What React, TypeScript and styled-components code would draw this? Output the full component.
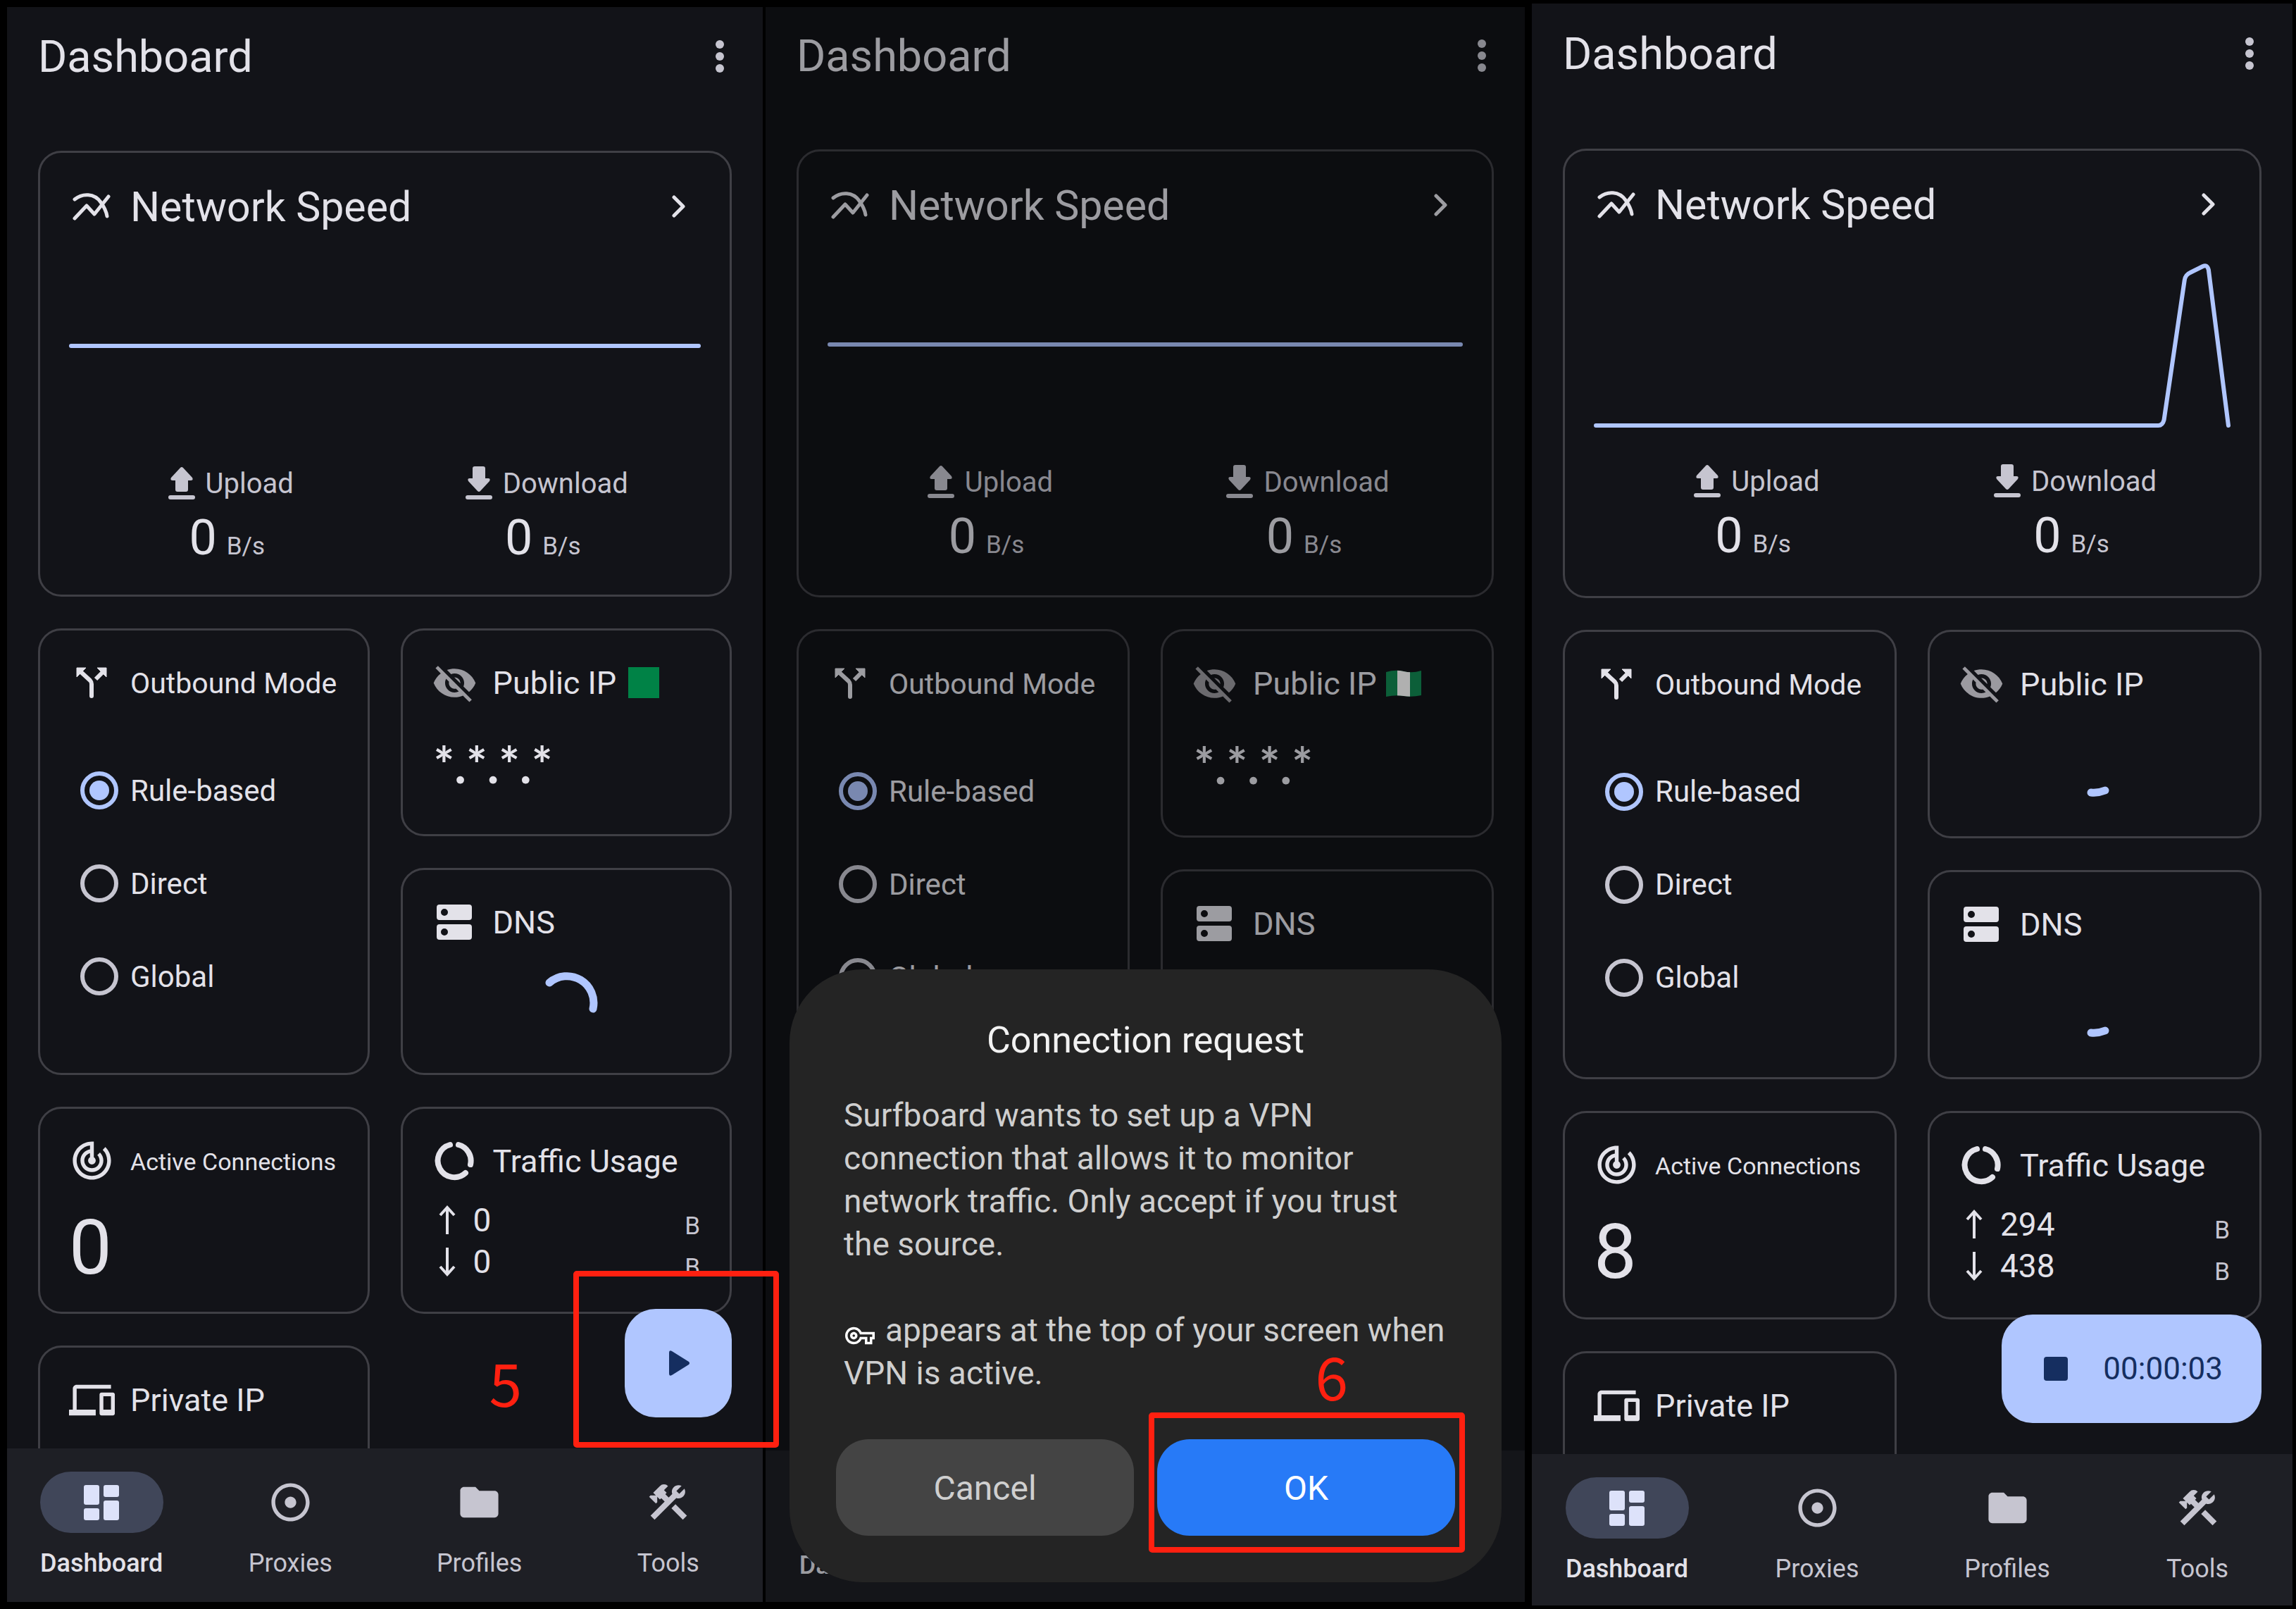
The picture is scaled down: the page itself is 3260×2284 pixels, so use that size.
import React, { useId, useState } from "react";
import styled, { createGlobalStyle } from "styled-components";
import {
  MdAdjust,
  MdConstruction,
  MdDevices,
  MdFolder,
  MdTrackChanges,
  MdVisibilityOff,
  MdOutlineVpnKey,
} from "react-icons/md";

const color = {
  surface: "#121318",
  bar: "#1e1f25",
  text: "#e3e2e9",
  muted: "#c6c5d0",
  outline: "#3f3f45",
  primary: "#b0c6ff",
  onPrimary: "#152e60",
  marker: "#ff2010",
};

const GlobalStyle = createGlobalStyle`
  * { box-sizing: border-box; }
  body { margin: 0; background: #000; }
  button { font: inherit; color: inherit; border: 0; background: none; padding: 0; cursor: pointer; }
  h1, h2, p { margin: 0; font-weight: 400; }
  svg { display: block; flex: none; }
`;

const Board = styled.div`
  display: grid;
  grid-template-columns: 1073fr 4px 1078fr 10px 1080fr;
  grid-template-areas: "one . two . three";
  min-height: 100vh;
  padding: 5px 5px 5px 10px;
  background: #000;
  font-family: Roboto, "Noto Sans", sans-serif;
  color: ${color.text};
`;

const Phone = styled.section<{ $area: string; $inset: number; $layer: number }>`
  grid-area: ${(p) => p.$area};
  margin: ${(p) => p.$inset}px 0;
  position: relative;
  z-index: ${(p) => p.$layer};
  min-width: 0;
  display: flex;
  flex-direction: column;
  background: ${color.surface};
`;

const AppBar = styled.header<{ $height: number }>`
  height: ${(p) => p.$height}px;
  padding: 0 44px;
  display: flex;
  align-items: center;
  justify-content: space-between;
`;

const AppTitle = styled.h1`
  padding-top: 2px;
  font-size: 63px;
  line-height: 72px;
`;

const MoreButton = styled.button`
  width: 34px;
  height: 60px;
  display: grid;
  place-items: center;
  color: ${color.muted};
`;

const Body = styled.div`
  flex: 1 1 0;
  min-height: 0;
  position: relative;
  display: flex;
  flex-direction: column;
`;

const Scroller = styled.main`
  flex: 1 1 0;
  min-height: 0;
  overflow: hidden;
  padding: 64px 44px 0;
`;

const Cards = styled.div`
  display: grid;
  grid-template-columns: 1fr 1fr;
  gap: 45px 44px;
`;

const Card = styled.section`
  border: 3px solid ${color.outline};
  border-radius: 33px;
  min-width: 0;
  display: flex;
  flex-direction: column;
`;

const SpeedCard = styled(Card)`
  grid-column: span 2;
  aspect-ratio: 14 / 9;
  padding: 40px 41px 0;
`;

const SmallCard = styled(Card)`
  aspect-ratio: 470 / 294;
  padding: 38px 41px 0;
`;

const TallCard = styled(Card)`
  grid-row: span 2;
  padding: 38px 41px 0;
`;

const CardHead = styled.div`
  height: 72px;
  display: flex;
  align-items: center;
`;

const IconSlot = styled.span<{ $dim?: boolean }>`
  width: 64px;
  margin-right: 23px;
  flex: none;
  display: grid;
  place-items: center;
  color: ${(p) => (p.$dim ? "#9b9aa0" : "inherit")};
`;

const CardTitle = styled.h2<{ $size: number }>`
  padding-top: 2px;
  font-size: ${(p) => p.$size}px;
  line-height: 72px;
  white-space: nowrap;
`;

const OpenButton = styled.button`
  margin-left: auto;
  width: 60px;
  height: 60px;
  display: grid;
  place-items: center;
`;

const ChartBox = styled.div`
  height: 240px;
  margin-top: 42px;
`;

const Meters = styled.div`
  display: grid;
  grid-template-columns: 1fr 1fr;
  margin-top: 47px;
`;

const Meter = styled.div`
  display: flex;
  flex-direction: column;
  align-items: center;
  gap: 7px;
`;

const MeterLabel = styled.div`
  display: flex;
  align-items: center;
  gap: 4px;
  height: 56px;
  font-size: 40px;
  color: ${color.muted};
`;

const MeterValue = styled.div`
  display: flex;
  align-items: baseline;
  gap: 14px;
  font-size: 70px;
  line-height: 84px;
`;

const Unit = styled.span`
  font-size: 35px;
  color: ${color.muted};
`;

const Options = styled.div`
  margin-top: 51px;
  padding-left: 16px;
  display: flex;
  flex-direction: column;
`;

const Option = styled.label`
  height: 132px;
  display: flex;
  align-items: center;
  gap: 17px;
  font-size: 42px;
  cursor: pointer;
`;

const Radio = styled.input`
  appearance: none;
  margin: 0;
  width: 54px;
  height: 54px;
  border: 6px solid ${color.muted};
  border-radius: 50%;
  display: grid;
  place-items: center;

  &:checked {
    border-color: ${color.primary};
  }
  &:checked::after {
    content: "";
    width: 28px;
    height: 28px;
    border-radius: 50%;
    background: ${color.primary};
  }
`;

const GreenSquare = styled.span`
  width: 44px;
  height: 44px;
  margin-left: 17px;
  background: #008246;
`;

const FlagSlot = styled.span`
  margin-left: 12px;
`;

const MaskedIp = styled.p`
  margin-top: 44px;
  padding-left: 3px;
  font-family: Lato, sans-serif;
  font-weight: 700;
  font-size: 70px;
  line-height: 72px;
`;

const SpinnerSlot = styled.div`
  margin-top: 35px;
  display: flex;
  justify-content: center;
`;

const Count = styled.p`
  font-size: 108px;
  line-height: 120px;
  margin-top: 27px;
`;

const Traffic = styled.div`
  margin-top: 19px;
  padding: 0 1px 0 10px;
`;

const TrafficRow = styled.div`
  height: 59px;
  display: flex;
  align-items: center;
  gap: 25px;
  font-size: 46px;
`;

const TrafficUnit = styled(Unit)`
  margin-left: auto;
  padding-top: 16px;
`;

const NavBar = styled.nav<{ $height: number }>`
  height: ${(p) => p.$height}px;
  padding-top: 33px;
  background: ${color.bar};
  display: grid;
  grid-template-columns: repeat(4, 1fr);
`;

const NavItem = styled.button<{ $active?: boolean }>`
  display: flex;
  flex-direction: column;
  align-items: center;
  gap: 21px;
  font-size: 36px;
  line-height: 44px;
  font-weight: ${(p) => (p.$active ? 500 : 400)};
  color: ${(p) => (p.$active ? color.text : color.muted)};
`;

const Pill = styled.span<{ $active?: boolean }>`
  width: 175px;
  height: 87px;
  border-radius: 44px;
  display: grid;
  place-items: center;
  background: ${(p) => (p.$active ? "#404659" : "transparent")};
  color: ${(p) => (p.$active ? "#dde2fa" : "inherit")};
`;

const FabAnchor = styled.div`
  position: absolute;
  right: 44px;
  bottom: 44px;
`;

const Fab = styled.button<{ $wide?: boolean }>`
  height: 154px;
  min-width: 152px;
  padding: ${(p) => (p.$wide ? "0 55px 0 60px" : "0 0 0 4px")};
  border-radius: 44px;
  display: flex;
  align-items: center;
  justify-content: center;
  gap: 50px;
  background: ${color.primary};
  color: ${color.onPrimary};
  font-size: 44px;
`;

const Ring = styled.span<{ $around: "fab" | "ok" }>`
  position: absolute;
  inset: ${(p) => (p.$around === "fab" ? "-54px -67px -43px -73px" : "-38px -14px -24px -12px")};
  border: 8px solid ${color.marker};
  border-radius: 5px;
  pointer-events: none;
`;

const StepNumber = styled.span<{ $at: "fab" | "ok" }>`
  position: absolute;
  right: ${(p) => (p.$at === "fab" ? "298px" : "152px")};
  top: ${(p) => (p.$at === "fab" ? "63px" : "-131px")};
  font-family: "Noto Sans CJK SC", "Noto Sans", sans-serif;
  font-size: 84px;
  line-height: 80px;
  color: ${color.marker};
`;

const Scrim = styled.div`
  position: absolute;
  inset: 0;
  padding: 0 33px 28px 34px;
  display: flex;
  align-items: flex-end;
  background: rgba(0, 0, 0, 0.31);
`;

const Dialog = styled.div`
  flex: 1;
  padding: 70px 66px 66px;
  border-radius: 104px;
  background: #242424;
`;

const DialogTitle = styled.h2`
  font-size: 52px;
  line-height: 62px;
  text-align: center;
  color: #f2f2f2;
`;

const DialogText = styled.div`
  margin-top: 45px;
  padding: 0 0 0 11px;
  font-size: 46px;
  line-height: 61px;
  color: #cfcfcf;
  white-space: nowrap;

  p + p {
    margin-top: 61px;
  }
  svg {
    display: inline-block;
    vertical-align: -13px;
    margin: 0 15px 0 2px;
    color: #fff;
  }
`;

const DialogActions = styled.div`
  margin-top: 63px;
  display: grid;
  grid-template-columns: 1fr 1fr;
  gap: 33px;
`;

const ActionSlot = styled.div`
  position: relative;
  display: grid;
`;

const ActionButton = styled.button<{ $primary?: boolean }>`
  height: 137px;
  padding-top: 2px;
  border-radius: 46px;
  font-size: 48px;
  background: ${(p) => (p.$primary ? "#277af7" : "#444")};
  color: ${(p) => (p.$primary ? "#fff" : "#cfcfcf")};
`;

const MoreIcon = () => (
  <svg width="12" height="46" viewBox="0 0 12 46" fill="currentColor">
    <circle cx="6" cy="6" r="6" />
    <circle cx="6" cy="23" r="6" />
    <circle cx="6" cy="40" r="6" />
  </svg>
);

const SpeedIcon = () => (
  <svg width="54" height="40" viewBox="0 0 54 40" fill="none" stroke="currentColor" strokeWidth="5" strokeLinecap="round" strokeLinejoin="round">
    <path d="M3 10C14 1 31 1 40 14C45 21 48 27 49 34" />
    <path d="M3 37L20 19L31 31L51 6" />
  </svg>
);

const ChevronIcon = () => (
  <svg width="22" height="34" viewBox="0 0 22 34" fill="none" stroke="currentColor" strokeWidth="5" strokeLinecap="round" strokeLinejoin="round">
    <path d="M3 4L16 17L3 30" />
  </svg>
);

const UploadIcon = () => (
  <svg width="60" height="50" viewBox="0 0 60 50" fill="currentColor">
    <path d="M28 3Q30 1 32 3L45 17Q47 21 43 21H39V34Q39 37 36 37H24Q21 37 21 34V21H17Q13 21 15 17Z" />
    <rect x="11" y="42" width="38" height="6" rx="3" />
  </svg>
);

const DownloadIcon = () => (
  <svg width="60" height="50" viewBox="0 0 60 50" fill="currentColor">
    <path d="M28 36Q30 38 32 36L45 22Q47 18 43 18H39V4Q39 1 36 1H24Q21 1 21 4V18H17Q13 18 15 22Z" />
    <rect x="11" y="42" width="38" height="6" rx="3" />
  </svg>
);

const SplitIcon = () => (
  <svg width="44" height="44" viewBox="0 0 44 44" fill="none" stroke="currentColor" strokeWidth="6">
    <path d="M7 7L20 19Q22 21 22 24V41" strokeLinecap="round" />
    <path d="M28 17L38 7" />
    <path d="M1 1H14L1 14ZM43 1V14L30 1Z" fill="currentColor" strokeWidth="1" strokeLinejoin="round" />
  </svg>
);

const ServerIcon = () => (
  <svg width="50" height="50" viewBox="0 0 50 50" fill="currentColor" fillRule="evenodd">
    <path d="M4 0H46Q50 0 50 4V18Q50 22 46 22H4Q0 22 0 18V4Q0 0 4 0ZM11 6A5 5 0 1 0 11 16A5 5 0 1 0 11 6Z" />
    <path d="M4 28H46Q50 28 50 32V46Q50 50 46 50H4Q0 50 0 46V32Q0 28 4 28ZM11 34A5 5 0 1 0 11 44A5 5 0 1 0 11 34Z" />
  </svg>
);

const TilesIcon = () => (
  <svg width="50" height="50" viewBox="0 0 50 50" fill="currentColor">
    <rect width="22" height="28" rx="3" />
    <rect y="33" width="22" height="17" rx="3" />
    <rect x="28" width="22" height="17" rx="3" />
    <rect x="28" y="22" width="22" height="28" rx="3" />
  </svg>
);

const UsageIcon = () => (
  <svg width="56" height="56" viewBox="0 0 56 56" fill="none" stroke="currentColor" strokeWidth="8" strokeLinecap="round">
    <path d="M22 5A23.500 23.500 0 1 0 44 45" />
    <path d="M34 5A23.500 23.500 0 0 1 51 33" />
  </svg>
);

const ArrowIcon = ({ down }: { down?: boolean }) => (
  <svg width="24" height="42" viewBox="0 0 24 42" fill="none" stroke="currentColor" strokeWidth="4">
    <path d={down ? "M12 1V39M2 28L12 39L22 28" : "M12 41V3M2 14L12 3L22 14"} />
  </svg>
);

const PlayIcon = () => (
  <svg width="30" height="36" viewBox="0 0 30 36" fill="currentColor">
    <path d="M0 3Q0 -1 4 1L28 16Q30 18 28 20L4 35Q0 37 0 33Z" />
  </svg>
);

const StopIcon = () => (
  <svg width="34" height="34" viewBox="0 0 34 34" fill="currentColor">
    <rect width="34" height="34" rx="4" />
  </svg>
);

const NigeriaFlag = () => {
  const id = useId();
  const wave = "M1 4Q14 0 26 3T51 2V37Q38 40 26 38T1 39Z";
  return (
    <svg width="52" height="40" viewBox="0 0 52 40">
      <clipPath id={id}>
        <path d={wave} />
      </clipPath>
      <g clipPath={`url(#${id})`}>
        <rect width="52" height="40" fill="#128a53" />
        <rect x="17" width="18" height="40" fill="#fff" />
      </g>
    </svg>
  );
};

const Spinner = ({ short }: { short?: boolean }) => (
  <svg width="90" height="90" viewBox="0 0 90 90" fill="none" stroke={color.primary} strokeWidth="11" strokeLinecap="round" role="progressbar" aria-label="Loading">
    <path d={short ? "M40 83Q50 84 60 80" : "M21 15A38 38 0 0 1 83 52"} />
  </svg>
);

const SpeedChart = ({ spike }: { spike?: boolean }) => (
  <svg width="100%" height="240" viewBox="0 0 900 240" preserveAspectRatio="none" fill="none" stroke={color.primary} strokeWidth="6" strokeLinecap="round" strokeLinejoin="round">
    <path d={spike ? "M3 236H798Q804 236 806 228L835 30Q836 22 843 19L861 10Q867 7 869 15L897 236" : "M3 120H897"} />
  </svg>
);

type PhoneProps = {
  area: string;
  inset: number;
  layer: number;
  appBar: number;
  navBar: number;
  spike?: boolean;
  ip: "square" | "flag" | "loading";
  shortSpinner?: boolean;
  stats?: { connections: number; up: number; down: number };
  fab?: React.ReactNode;
  children?: React.ReactNode;
};

const tabs = [
  { label: "Dashboard", icon: <TilesIcon /> },
  { label: "Proxies", icon: <MdAdjust size={65} /> },
  { label: "Profiles", icon: <MdFolder size={65} /> },
  { label: "Tools", icon: <MdConstruction size={65} /> },
];

const modes = ["Rule-based", "Direct", "Global"];

function PhoneScreen(props: PhoneProps) {
  const [mode, setMode] = useState(modes[0]);
  const group = useId();
  return (
    <Phone $area={props.area} $inset={props.inset} $layer={props.layer}>
      <AppBar $height={props.appBar}>
        <AppTitle>Dashboard</AppTitle>
        <MoreButton aria-label="More options">
          <MoreIcon />
        </MoreButton>
      </AppBar>
      <Body>
        <Scroller>
          <Cards>
            <SpeedCard>
              <CardHead>
                <IconSlot>
                  <SpeedIcon />
                </IconSlot>
                <CardTitle $size={59}>Network Speed</CardTitle>
                <OpenButton aria-label="Open network speed">
                  <ChevronIcon />
                </OpenButton>
              </CardHead>
              <ChartBox>
                <SpeedChart spike={props.spike} />
              </ChartBox>
              <Meters>
                <Meter>
                  <MeterLabel>
                    <UploadIcon />
                    Upload
                  </MeterLabel>
                  <MeterValue>
                    0<Unit>B/s</Unit>
                  </MeterValue>
                </Meter>
                <Meter>
                  <MeterLabel>
                    <DownloadIcon />
                    Download
                  </MeterLabel>
                  <MeterValue>
                    0<Unit>B/s</Unit>
                  </MeterValue>
                </Meter>
              </Meters>
            </SpeedCard>

            <TallCard>
              <CardHead>
                <IconSlot>
                  <SplitIcon />
                </IconSlot>
                <CardTitle $size={41}>Outbound Mode</CardTitle>
              </CardHead>
              <Options role="radiogroup" aria-label="Outbound Mode">
                {modes.map((name) => (
                  <Option key={name}>
                    <Radio type="radio" name={group} checked={mode === name} onChange={() => setMode(name)} />
                    {name}
                  </Option>
                ))}
              </Options>
            </TallCard>

            <SmallCard>
              <CardHead>
                <IconSlot $dim>
                  <MdVisibilityOff size={65} />
                </IconSlot>
                <CardTitle $size={45}>Public IP</CardTitle>
                {props.ip === "square" && <GreenSquare />}
                {props.ip === "flag" && (
                  <FlagSlot>
                    <NigeriaFlag />
                  </FlagSlot>
                )}
              </CardHead>
              {props.ip === "loading" ? (
                <SpinnerSlot>
                  <Spinner short />
                </SpinnerSlot>
              ) : (
                <MaskedIp>*.*.*.*</MaskedIp>
              )}
            </SmallCard>

            <SmallCard>
              <CardHead>
                <IconSlot>
                  <ServerIcon />
                </IconSlot>
                <CardTitle $size={45}>DNS</CardTitle>
              </CardHead>
              <SpinnerSlot>
                <Spinner short={props.shortSpinner} />
              </SpinnerSlot>
            </SmallCard>

            {props.stats && (
              <>
                <SmallCard>
                  <CardHead>
                    <IconSlot>
                      <MdTrackChanges size={65} />
                    </IconSlot>
                    <CardTitle $size={34}>Active Connections</CardTitle>
                  </CardHead>
                  <Count>{props.stats.connections}</Count>
                </SmallCard>

                <SmallCard>
                  <CardHead>
                    <IconSlot>
                      <UsageIcon />
                    </IconSlot>
                    <CardTitle $size={45}>Traffic Usage</CardTitle>
                  </CardHead>
                  <Traffic>
                    <TrafficRow>
                      <ArrowIcon />
                      {props.stats.up}
                      <TrafficUnit>B</TrafficUnit>
                    </TrafficRow>
                    <TrafficRow>
                      <ArrowIcon down />
                      {props.stats.down}
                      <TrafficUnit>B</TrafficUnit>
                    </TrafficRow>
                  </Traffic>
                </SmallCard>

                <SmallCard>
                  <CardHead>
                    <IconSlot>
                      <MdDevices size={65} />
                    </IconSlot>
                    <CardTitle $size={45}>Private IP</CardTitle>
                  </CardHead>
                </SmallCard>
              </>
            )}
          </Cards>
        </Scroller>
        {props.fab && <FabAnchor>{props.fab}</FabAnchor>}
      </Body>
      <NavBar $height={props.navBar}>
        {tabs.map((tab, i) => (
          <NavItem key={tab.label} $active={i === 0}>
            <Pill $active={i === 0}>{tab.icon}</Pill>
            {tab.label}
          </NavItem>
        ))}
      </NavBar>
      {props.children}
    </Phone>
  );
}

export default function App() {
  return (
    <>
      <GlobalStyle />
      <Board>
        <PhoneScreen
          area="one"
          inset={5}
          layer={2}
          appBar={140}
          navBar={218}
          ip="square"
          stats={{ connections: 0, up: 0, down: 0 }}
          fab={
            <>
              <Fab aria-label="Start">
                <PlayIcon />
              </Fab>
              <Ring $around="fab" />
              <StepNumber $at="fab">5</StepNumber>
            </>
          }
        />
        <PhoneScreen area="two" inset={5} layer={1} appBar={138} navBar={215} ip="flag">
          <Scrim>
            <Dialog role="dialog" aria-label="Connection request">
              <DialogTitle>Connection request</DialogTitle>
              <DialogText>
                <p>
                  Surfboard wants to set up a VPN
                  <br />
                  connection that allows it to monitor
                  <br />
                  network traffic. Only accept if you trust
                  <br />
                  the source.
                </p>
                <p>
                  <MdOutlineVpnKey size={42} />
                  appears at the top of your screen when
                  <br />
                  VPN is active.
                </p>
              </DialogText>
              <DialogActions>
                <ActionSlot>
                  <ActionButton>Cancel</ActionButton>
                </ActionSlot>
                <ActionSlot>
                  <ActionButton $primary>OK</ActionButton>
                  <Ring $around="ok" />
                  <StepNumber $at="ok">6</StepNumber>
                </ActionSlot>
              </DialogActions>
            </Dialog>
          </Scrim>
        </PhoneScreen>
        <PhoneScreen
          area="three"
          inset={0}
          layer={1}
          appBar={142}
          navBar={215}
          spike
          ip="loading"
          shortSpinner
          stats={{ connections: 8, up: 294, down: 438 }}
          fab={
            <Fab $wide>
              <StopIcon />
              00:00:03
            </Fab>
          }
        />
      </Board>
    </>
  );
}
